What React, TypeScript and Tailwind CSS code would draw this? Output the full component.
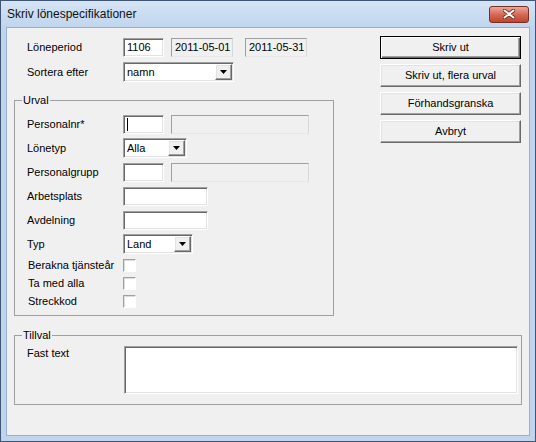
import type { ReactNode } from 'react'

const SUNKEN =
  'border border-t-[#a0a0a0] border-l-[#a0a0a0] border-b-white border-r-white shadow-[inset_1px_1px_0_#696969,inset_-1px_-1px_0_#e3e3e3]'
const RAISED =
  'border border-t-white border-l-white border-b-[#696969] border-r-[#696969] shadow-[inset_-1px_-1px_0_#a0a0a0,inset_1px_1px_0_#e3e3e3]'

function Label({ children }: { children: ReactNode }) {
  return <span className="w-[96px] shrink-0 leading-[13px]">{children}</span>
}

function Input({ w, children }: { w: string; children?: ReactNode }) {
  return (
    <div className={`${w} h-[19px] bg-white ${SUNKEN} flex items-center pl-[3px]`}>{children}</div>
  )
}

function ReadOnly({ w, text }: { w: string; text?: string }) {
  return (
    <div
      className={`${w} h-[19px] bg-[#f0f0f0] border border-t-[#a0a0a0] border-l-[#a0a0a0] border-b-[#e8e8e8] border-r-[#d8d8d8] flex items-center pl-[3px]`}
    >
      {text}
    </div>
  )
}

function Combo({ w, value }: { w: string; value: string }) {
  return (
    <div className={`${w} h-[20px] bg-white ${SUNKEN} flex items-stretch p-[1px]`}>
      <span className="flex-1 pl-[2px] leading-[16px]">{value}</span>
      <span className={`w-[17px] bg-[#f0f0f0] ${RAISED} flex items-center justify-center`}>
        <svg width="7" height="4" viewBox="0 0 7 4">
          <path d="M0 0h7L3.5 4z" fill="#000" />
        </svg>
      </span>
    </div>
  )
}

function Check() {
  return (
    <span className="w-[13px] h-[13px] bg-white border border-t-[#a0a0a0] border-l-[#a0a0a0] border-b-white border-r-white shadow-[inset_1px_1px_0_#dcdcdc]" />
  )
}

function Button({ children, primary }: { children: ReactNode; primary?: boolean }) {
  return (
    <button
      className={`w-[141px] h-[23px] bg-[#f0f0f0] text-[11px] font-normal leading-[13px] flex items-center justify-center ${
        primary
          ? 'border border-black shadow-[inset_1px_1px_0_#fff,inset_-1px_-1px_0_#696969,inset_-2px_-2px_0_#a0a0a0]'
          : RAISED
      }`}
    >
      {children}
    </button>
  )
}

export default function App() {
  return (
    <div className="w-[536px] h-[442px] flex flex-col bg-[#c0d5ed] border border-[#3e5674] font-['Liberation_Sans',Arial,sans-serif] text-[11px] text-black overflow-hidden">
      {/* Title bar */}
      <div className="h-[26px] shrink-0 flex items-center justify-between pl-[6px] pr-[6px] bg-linear-to-b from-[#d6e4f5] to-[#c0d5ed]">
        <span className="text-[12px] leading-[14px] text-[#111]">Skriv lönespecifikationer</span>
        <span className="w-[40px] h-[17px] rounded-[3px] border border-[#7a2f25] bg-linear-to-b from-[#e9a99b] via-[#d46a55] to-[#c0432c] flex items-center justify-center">
          <svg width="12" height="10" viewBox="0 0 12 10">
            <path
              d="M1.5 1.5l9 7M10.5 1.5l-9 7"
              stroke="#6a2a20"
              strokeWidth="3.6"
              strokeLinecap="round"
            />
            <path d="M1.5 1.5l9 7M10.5 1.5l-9 7" stroke="#fff" strokeWidth="2" strokeLinecap="round" />
          </svg>
        </span>
      </div>

      {/* Body */}
      <div className="flex-1 mx-[5px] mb-[5px] border border-[#98b1cf] bg-[#f0f0f0] flex flex-col pl-[7px] pt-[8px]">
        <div className="flex items-start">
          <div className="w-[320px] flex flex-col">
            <div className="mt-[1px] h-[20px] flex items-center pl-[13px]">
              <Label>Löneperiod</Label>
              <Input w="w-[41px]">1106</Input>
              <div className="ml-[7px]">
                <ReadOnly w="w-[62px]" text="2011-05-01" />
              </div>
              <div className="ml-[12px]">
                <ReadOnly w="w-[62px]" text="2011-05-31" />
              </div>
            </div>
            <div className="mt-[5px] h-[20px] flex items-center pl-[13px]">
              <Label>Sortera efter</Label>
              <Combo w="w-[111px]" value="namn" />
            </div>

            {/* Urval */}
            <fieldset className="mt-[12px] w-[320px] border border-[#a0a0a0] pb-[5px]">
              <legend className="ml-[7px] px-[1px] leading-[13px]">Urval</legend>
              <div className="mt-[5px] flex flex-col pl-[12px]">
                <div className="h-[24px] flex items-center">
                  <Label>Personalnr*</Label>
                  <Input w="w-[41px]">
                    <span className="w-[1px] h-[13px] bg-black" />
                  </Input>
                  <div className="ml-[7px]">
                    <ReadOnly w="w-[138px]" />
                  </div>
                </div>
                <div className="h-[24px] flex items-center">
                  <Label>Lönetyp</Label>
                  <Combo w="w-[64px]" value="Alla" />
                </div>
                <div className="h-[24px] flex items-center">
                  <Label>Personalgrupp</Label>
                  <Input w="w-[41px]" />
                  <div className="ml-[7px]">
                    <ReadOnly w="w-[138px]" />
                  </div>
                </div>
                <div className="h-[24px] flex items-center">
                  <Label>Arbetsplats</Label>
                  <Input w="w-[85px]" />
                </div>
                <div className="h-[24px] flex items-center">
                  <Label>Avdelning</Label>
                  <Input w="w-[85px]" />
                </div>
                <div className="h-[24px] flex items-center">
                  <Label>Typ</Label>
                  <Combo w="w-[70px]" value="Land" />
                </div>
                <div className="h-[18px] flex items-center pl-[1px]">
                  <span className="w-[95px] shrink-0 leading-[13px]">Berakna tjänsteår</span>
                  <Check />
                </div>
                <div className="h-[18px] flex items-center pl-[1px]">
                  <span className="w-[95px] shrink-0 leading-[13px]">Ta med alla</span>
                  <Check />
                </div>
                <div className="h-[18px] flex items-center pl-[1px]">
                  <span className="w-[95px] shrink-0 leading-[13px]">Streckkod</span>
                  <Check />
                </div>
              </div>
            </fieldset>
          </div>

          {/* Buttons */}
          <div className="ml-[46px] flex flex-col gap-[5px]">
            <Button primary>Skriv ut</Button>
            <Button>Skriv ut, flera urval</Button>
            <Button>Förhandsgranska</Button>
            <Button>Avbryt</Button>
          </div>
        </div>

        {/* Tillval */}
        <fieldset className="mt-[13px] w-[508px] border border-[#a0a0a0] pb-[10px]">
          <legend className="ml-[7px] px-[1px] leading-[13px]">Tillval</legend>
          <div className="mt-[4px] flex items-start pl-[12px]">
            <span className="w-[97px] shrink-0 leading-[13px] pt-[1px]">Fast text</span>
            <div className={`w-[394px] h-[48px] bg-white ${SUNKEN}`} />
          </div>
        </fieldset>
      </div>
    </div>
  )
}
